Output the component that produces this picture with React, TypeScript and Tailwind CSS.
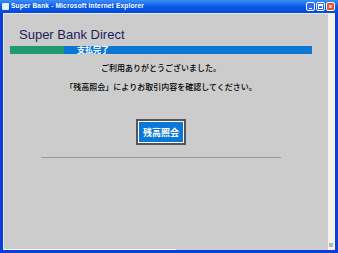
import React from 'react';

// IE window chrome: title bar, blue frame, gray page
const TitleBar = () => (
  <div className="relative flex h-[13px] items-center bg-gradient-to-b from-[#3d8df5] via-[#0a5ae6] to-[#0548d8] pl-[2px]">
    <div className="mr-[2px] h-[7px] w-[7px] rounded-[1px] bg-[#e8f0ff]" />
    <span className="font-['Liberation_Sans',sans-serif] text-[6.5px] font-bold leading-none tracking-[0.2px] text-white">
      Super Bank - Microsoft Internet Explorer
    </span>
    <div className="absolute right-[3px] top-[2px] flex gap-[1px]">
      <div className="flex h-[9px] w-[9px] items-end justify-center rounded-[2px] border border-white bg-[#2a6cf0] pb-[1px]">
        <div className="h-[1px] w-[3px] bg-white" />
      </div>
      <div className="flex h-[9px] w-[9px] items-center justify-center rounded-[2px] border border-white bg-[#2a6cf0]">
        <div className="h-[5px] w-[5px] border border-white border-t-2" />
      </div>
      <div className="flex h-[9px] w-[9px] items-center justify-center rounded-[2px] border border-white bg-[#e0542a] text-[7px] font-bold leading-none text-white">
        ×
      </div>
    </div>
  </div>
);

const ProgressBar = () => (
  <div className="flex h-[8px] w-full">
    <div className="w-[54px] bg-[#1f9a6e]" />
    <div className="flex flex-1 items-center bg-[#0a78d4] pl-[13px]">
      <span className="font-['Noto_Sans_CJK_JP',sans-serif] text-[8px] font-bold leading-[8px] text-white">
        支払完了
      </span>
    </div>
  </div>
);

export default function App() {
  return (
    <div className="flex h-[253px] w-[338px] flex-col bg-[#0b3fd8]">
      <TitleBar />
      <div className="flex flex-1 pl-[3px] pr-[3px] pb-[3px]">
        <div className="flex flex-1 flex-col border-l border-t border-l-[#e8e8e8] border-t-[#e8e8e8] bg-[#cccccc]">
          <div className="ml-[6px] flex w-[302px] flex-1 flex-col">
            <h1 className="mt-[13px] pl-[9px] font-['Liberation_Sans',Arial,sans-serif] text-[13px] leading-[16px] text-[#1c1c5c]">
              Super Bank Direct
            </h1>
            <div className="mt-[3px]">
              <ProgressBar />
            </div>
            <div className="mt-[9px] flex flex-col items-center gap-[9px] font-['Noto_Sans_CJK_JP',sans-serif] text-[8px] font-medium leading-[10px] text-black">
              <p>ご利用ありがとうございました。</p>
              <p>「残高照会」によりお取引内容を確認してください。</p>
            </div>
            <div className="mt-[27px] flex justify-center">
              <button className="h-[26px] w-[50px] border-2 border-[#555555] bg-white p-[1px]">
                <span className="flex h-full w-full items-center justify-center bg-[#0a78d4] font-['Noto_Sans_CJK_JP',sans-serif] text-[9px] font-bold leading-none text-white">
                  残高照会
                </span>
              </button>
            </div>
            <div className="mx-auto mt-[12px] h-[1px] w-[240px] bg-[#999999]" />
          </div>
          <div className="h-[1px] w-[172px] bg-white" />
        </div>
        <div className="relative w-[7px] bg-[#f4f2ea]">
          <div className="absolute bottom-[3px] left-[1px] h-[4px] w-[4px] bg-[#b8b8b0]" />
        </div>
      </div>
    </div>
  );
}
